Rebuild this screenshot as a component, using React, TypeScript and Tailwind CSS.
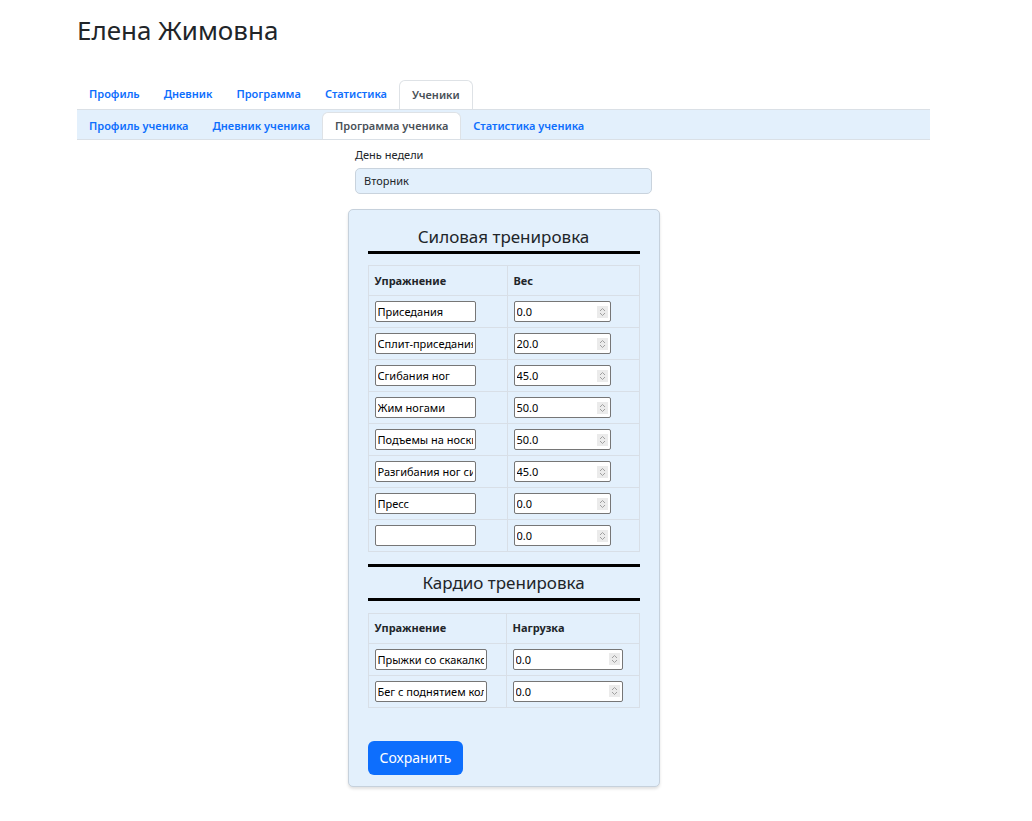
import React from "react";

const strength: [string, string][] = [
	["Приседания", "0.0"],
	["Сплит-приседания", "20.0"],
	["Сгибания ног", "45.0"],
	["Жим ногами", "50.0"],
	["Подъемы на носки", "50.0"],
	["Разгибания ног сидя", "45.0"],
	["Пресс", "0.0"],
	["", "0.0"],
];

const cardio: [string, string][] = [
	["Прыжки со скакалкой", "0.0"],
	["Бег с поднятием колен", "0.0"],
];

const mainTabs = ["Профиль", "Дневник", "Программа", "Статистика", "Ученики"];
const subTabs = ["Профиль ученика", "Дневник ученика", "Программа ученика", "Статистика ученика"];

const Spinner = () => (
	<span className="mr-[2px] flex h-[12px] w-[11px] flex-col items-center justify-center bg-[#ebebeb]">
		<svg width="7" height="10" viewBox="0 0 7 10" fill="none" stroke="#a0a0a0" strokeWidth="1">
			<path d="M1 4 L3.5 1.5 L6 4" />
			<path d="M1 6 L3.5 8.5 L6 6" />
		</svg>
	</span>
);

const NumberInput = ({ value, width }: { value: string; width: string }) => (
	<div className={`flex h-[21px] ${width} items-center rounded-[2px] border border-[#767676] bg-white`}>
		<input
			readOnly
			defaultValue={value}
			className="h-full min-w-0 flex-1 bg-transparent pl-[2px] text-[11px] text-black outline-none"
		/>
		<Spinner />
	</div>
);

const TextInput = ({ value, width }: { value: string; width: string }) => (
	<input
		readOnly
		defaultValue={value}
		className={`block h-[21px] ${width} rounded-[2px] border border-[#767676] bg-white px-[2px] text-[11px] text-black outline-none`}
	/>
);

const ExerciseTable = ({
	rows,
	second,
	col1,
	textW,
	numW,
}: {
	rows: [string, string][];
	second: string;
	col1: string;
	textW: string;
	numW: string;
}) => (
	<table className="w-full border-collapse">
		<thead>
			<tr>
				<th className={`${col1} h-[30px] border border-[#d8dfe7] px-[6px] text-left align-middle text-[11px] font-bold`}>
					Упражнение
				</th>
				<th className="h-[30px] border border-[#d8dfe7] px-[6px] text-left align-middle text-[11px] font-bold">
					{second}
				</th>
			</tr>
		</thead>
		<tbody>
			{rows.map((r, i) => (
				<tr key={i}>
					<td className="h-[32px] border border-[#d8dfe7] px-[6px] align-middle">
						<TextInput value={r[0]} width={textW} />
					</td>
					<td className="h-[32px] border border-[#d8dfe7] px-[6px] align-middle">
						<NumberInput value={r[1]} width={numW} />
					</td>
				</tr>
			))}
		</tbody>
	</table>
);

export default function App() {
	return (
		<div className="min-h-screen bg-white font-['Noto_Sans','Open_Sans',sans-serif] text-[#212529]">
			<div className="ml-[77px] w-[853px]">
				<h2 className="pt-[15px] text-[26px] leading-[1.2] font-normal">Елена Жимовна</h2>

				<ul className="mt-[34px] flex h-[29px] items-end">
					{mainTabs.map((t) => (
						<li
							key={t}
							className={`flex h-full items-center px-3 text-[11px] font-semibold ${
								t === "Ученики"
									? "rounded-t-[6px] border border-b-0 border-[#dee2e6] bg-white text-[#495057]"
									: "text-[#0d6efd]"
							}`}
						>
							{t}
						</li>
					))}
				</ul>

				<ul className="flex h-[31px] items-end border-y border-[#dae0e6] bg-[#e3f0fc] pt-[2px]">
					{subTabs.map((t) => (
						<li
							key={t}
							className={`flex h-full items-center px-3 pt-[1px] text-[11px] font-semibold ${
								t === "Программа ученика"
									? "rounded-t-[6px] border border-b-0 border-[#dee2e6] bg-white text-[#495057]"
									: "text-[#0d6efd]"
							}`}
						>
							{t}
						</li>
					))}
				</ul>

				<div className="flex flex-col items-center">
					<div className="mt-[7px] w-[297px]">
						<label className="block text-[11px] leading-[16.5px]">День недели</label>
						<div className="mt-[4px] flex h-[26px] items-center rounded-[5px] border border-[#c9d3dd] bg-[#e3f0fc] px-[8px] pt-[1px] text-[11px]">
							Вторник
						</div>
					</div>

					<div className="mt-[15px] w-[312px] rounded-[5px] border border-[#c6d1dc] bg-[#e3f0fc] px-[19px] pt-[16px] pb-[11px] shadow-[0_2px_3px_rgba(0,0,0,0.12)]">
						<h4 className="text-center text-[17px] leading-[21.6px]">Силовая тренировка</h4>
						<div className="mt-[4px] h-[3px] bg-black" />
						<div className="mt-[11px]">
							<ExerciseTable rows={strength} second="Вес" col1="w-[139px]" textW="w-[101px]" numW="w-[97px]" />
						</div>

						<div className="mt-[12px] h-[3px] bg-black" />
						<h4 className="mt-[5px] text-center text-[17px] leading-[21.6px]">Кардио тренировка</h4>
						<div className="mt-[4px] h-[3px] bg-black" />
						<div className="mt-[12px]">
							<ExerciseTable rows={cardio} second="Нагрузка" col1="w-[138px]" textW="w-[112px]" numW="w-[110px]" />
						</div>

						<button className="mt-[33px] h-[34px] rounded-[6px] bg-[#0d6efd] px-[12px] text-[14px] text-white">
							Сохранить
						</button>
					</div>
				</div>
			</div>
		</div>
	);
}
